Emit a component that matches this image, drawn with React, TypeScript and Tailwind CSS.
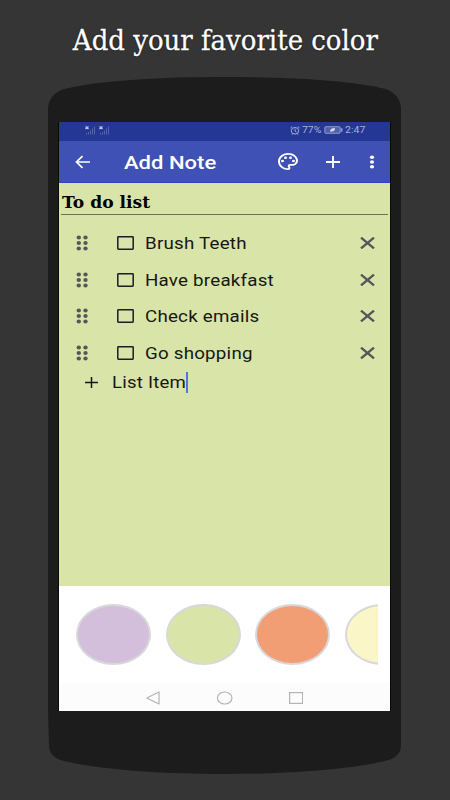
const ITEMS = ["Brush Teeth", "Have breakfast", "Check emails", "Go shopping"];

const COLORS = [
  { name: "Lavender", value: "bg-[#d3bfdb]" },
  { name: "Lime", value: "bg-[#d9e4a9]" },
  { name: "Coral", value: "bg-[#f19e75]" },
  { name: "Cream", value: "bg-[#fbf6c7]" },
];

export default function App() {
  return (
    <main className="flex h-[800px] w-[450px] flex-col overflow-hidden bg-[#353535] font-[Roboto,sans-serif]">
      <h1 className="flex h-[77px] shrink-0 justify-center pt-[22px] font-['DejaVu_Serif',serif] text-[27px] leading-[38px] whitespace-nowrap text-white [-webkit-text-stroke:0.3px_white] [text-shadow:0_0_2px_#000]">
        <span className="origin-center scale-x-[0.963]">Add your favorite color</span>
      </h1>

      <div className="ml-[48px] w-[353px]">
        {/* Top of the phone */}
        <svg className="block" width="353" height="45" viewBox="0 0 353 45" fill="#1c1c1c">
          <path d="M0 45V31C1 21 6 16 16 12C54 3 115 0 176 0C238 0 300 3 338 12C347 16 352 21 353 31V45Z" />
        </svg>

        <div className="bg-[#1c1c1c] px-[11px]">
          <div className="h-[589px] w-[331px] shadow-[0_0_0_1px_#080808]">
            <StatusBar />
            <Toolbar />
            <Note />
            <Palette />
            <NavBar />
          </div>
        </div>

        {/* Bottom of the phone */}
        <svg className="block" width="353" height="63" viewBox="0 0 353 63" fill="#1c1c1c">
          <path d="M0 0H353V34C353 41 349 46 341 49C303 59 235 63 176 63C118 63 50 59 12 49C5 46 1 41 1 34Z" />
        </svg>
      </div>
    </main>
  );
}

function StatusBar() {
  return (
    <div className="flex h-[19px] items-center bg-[#253794] pb-[3px] text-[#a6afd8]">
      <div className="ml-[26px] flex gap-[3px]">
        <Signal />
        <Signal />
      </div>
      <svg className="ml-[180px] shrink-0" width="10" height="9" viewBox="0 0 10 9" fill="none" stroke="currentColor">
        <ellipse cx="5" cy="4.8" rx="3.7" ry="3.3" />
        <path d="M5 2.7V5L6.5 6M.5 2L2.3.6M9.5 2L7.7.6M2 8.6L2.8 7.6M8 8.6L7.2 7.6" />
      </svg>
      <span className="ml-[2px] w-[21px] text-[9px] leading-none whitespace-nowrap">
        <span className="inline-block origin-left scale-x-[1.16]">77%</span>
      </span>
      <svg className="ml-px shrink-0" width="19" height="8" viewBox="0 0 19 8" fill="none" stroke="currentColor">
        <rect x=".8" y=".7" width="15.4" height="6.6" rx="1" fill="#5260aa" strokeWidth=".8" />
        <path d="M17.8 2.3V5.7" strokeWidth="1.2" />
        <path d="M6 5.8C6 3 8 2 11 2C11 4.5 10 6 7 5.5Z" fill="#d3d8ee" stroke="none" />
      </svg>
      <span className="ml-[2px] text-[9px] leading-none whitespace-nowrap">
        <span className="inline-block origin-left scale-x-[1.17]">2:47</span>
      </span>
    </div>
  );
}

function Signal() {
  return (
    <svg width="11" height="9" viewBox="0 0 11 9" fill="none">
      <path d="M1.5 7V8.5M3.5 6V8.5M5.5 4.5V8.5M7.5 2.5V8.5M9.5 .5V8.5" stroke="#5664b0" />
      <path d="M.5 .5L3.5 3M3.5 .5L.5 3" stroke="#c3c9e5" strokeWidth="1.2" />
    </svg>
  );
}

function Toolbar() {
  return (
    <header className="flex h-[42px] items-center border-b border-[#2f43bd] bg-[#3f51b5] text-white">
      <svg className="ml-[16px] shrink-0" width="16" height="14" viewBox="0 0 16 14" fill="none" stroke="currentColor" strokeWidth="1.7">
        <path d="M15 7H1.5M7.5 1.2L1.5 7L7.5 12.8" />
      </svg>
      <div className="ml-[33px] w-[154px] pt-[2px] text-[18px] font-medium leading-none whitespace-nowrap">
        <span className="inline-block origin-left scale-x-[1.225]">Add Note</span>
      </div>
      <svg className="shrink-0" width="20" height="17" viewBox="2 2 20 20" preserveAspectRatio="none" fill="currentColor">
        <path d="M12 22C6.49 22 2 17.51 2 12S6.49 2 12 2s10 4.04 10 9c0 3.31-2.69 6-6 6h-1.77c-.28 0-.5.22-.5.5 0 .12.05.23.13.33.41.47.64 1.06.64 1.67A2.5 2.5 0 0 1 12 22zm0-18c-4.41 0-8 3.59-8 8s3.59 8 8 8c.28 0 .5-.22.5-.5a.54.54 0 0 0-.14-.35c-.41-.46-.63-1.05-.63-1.65a2.5 2.5 0 0 1 2.5-2.5H16c2.21 0 4-1.79 4-4 0-3.86-3.59-7-8-7z" />
        <circle cx="6.5" cy="11.5" r="1.5" />
        <circle cx="9.5" cy="7.5" r="1.5" />
        <circle cx="14.5" cy="7.5" r="1.5" />
        <circle cx="17.5" cy="11.5" r="1.5" />
      </svg>
      <svg className="ml-[28px] shrink-0" width="14" height="12" viewBox="0 0 14 12" stroke="currentColor" strokeWidth="1.9">
        <path d="M0 6H14M7 0V12" />
      </svg>
      <svg className="ml-[29px] shrink-0" width="6" height="14" viewBox="0 0 6 14" fill="currentColor">
        <ellipse cx="3" cy="2.3" rx="2.1" ry="1.7" />
        <ellipse cx="3" cy="7" rx="2.1" ry="1.7" />
        <ellipse cx="3" cy="11.7" rx="2.1" ry="1.7" />
      </svg>
    </header>
  );
}

function Note() {
  return (
    <section className="h-[403px] bg-[#d9e4a9] text-[#161713]">
      <div className="mx-[2px] h-[32px] border-b border-[#6c7255] pt-[9px] pl-px font-['DejaVu_Serif',serif] text-[16px] leading-[21px] font-bold whitespace-nowrap text-black">
        <span className="inline-block origin-left scale-x-[1.07]">To do list</span>
      </div>

      <ul className="pt-[10px]">
        {ITEMS.map((item) => (
          <li key={item} className="flex h-[36.5px] items-center pl-[17px]">
            <DragHandle />
            <svg className="ml-[27.5px] shrink-0" width="17" height="14" viewBox="0 0 17 14" fill="none" stroke="#1b1c25" strokeWidth="1.5">
              <rect x=".8" y=".8" width="15.4" height="12.4" rx=".6" />
            </svg>
            <span className="ml-[11.5px] w-[215px] pt-[2px] text-[16px] whitespace-nowrap">
              <span className="inline-block origin-left scale-x-[1.17] tracking-[0.2px]">{item}</span>
            </span>
            <svg className="shrink-0" width="15" height="12" viewBox="0 0 15 12" stroke="#55565a" strokeWidth="2.3">
              <path d="M1 .6L14 11.4M14 .6L1 11.4" />
            </svg>
          </li>
        ))}
      </ul>

      <div className="flex h-[22px] items-center pl-[26px]">
        <svg className="shrink-0" width="13" height="11" viewBox="0 0 13 11" stroke="currentColor" strokeWidth="1.5">
          <path d="M0 5.5H13M6.5 0V11" />
        </svg>
        <span className="ml-[14px] w-[74px] pt-[2px] text-[16px] whitespace-nowrap">
          <span className="inline-block origin-left scale-x-[1.16] tracking-[0.2px]">List Item</span>
        </span>
        <span className="h-[21px] w-[2px] bg-[#5872d8]" />
      </div>
    </section>
  );
}

function DragHandle() {
  return (
    <svg className="shrink-0" width="13" height="16" viewBox="0 0 13 16" fill="#55565a">
      {[2.5, 8, 13.5].map((y) => (
        <g key={y}>
          <ellipse cx="2.8" cy={y} rx="2.2" ry="1.9" />
          <ellipse cx="9.5" cy={y} rx="2.2" ry="1.9" />
        </g>
      ))}
    </svg>
  );
}

function Palette() {
  return (
    <div className="h-[97px] bg-white pt-[18px] pl-[17px]">
      <div className="flex w-[302px] gap-[14.5px] overflow-hidden">
        {COLORS.map((color) => (
          <button
            key={color.name}
            aria-label={color.name}
            className={`h-[61px] w-[75px] shrink-0 rounded-[50%] border-2 border-[#d8d8da] ${color.value}`}
          />
        ))}
      </div>
    </div>
  );
}

function NavBar() {
  return (
    <nav className="flex h-[28px] items-center bg-[#fcfcfc] pt-[2px] pl-[87px]">
      <svg width="157" height="14" viewBox="0 0 157 14" fill="none" stroke="#b3b3b3" strokeWidth="1.2">
        <path d="M13 1V13L.8 7Z" strokeLinejoin="round" />
        <ellipse cx="78.7" cy="7" rx="7.3" ry="6" />
        <rect x="143.6" y="1.6" width="13" height="10.8" />
      </svg>
    </nav>
  );
}
